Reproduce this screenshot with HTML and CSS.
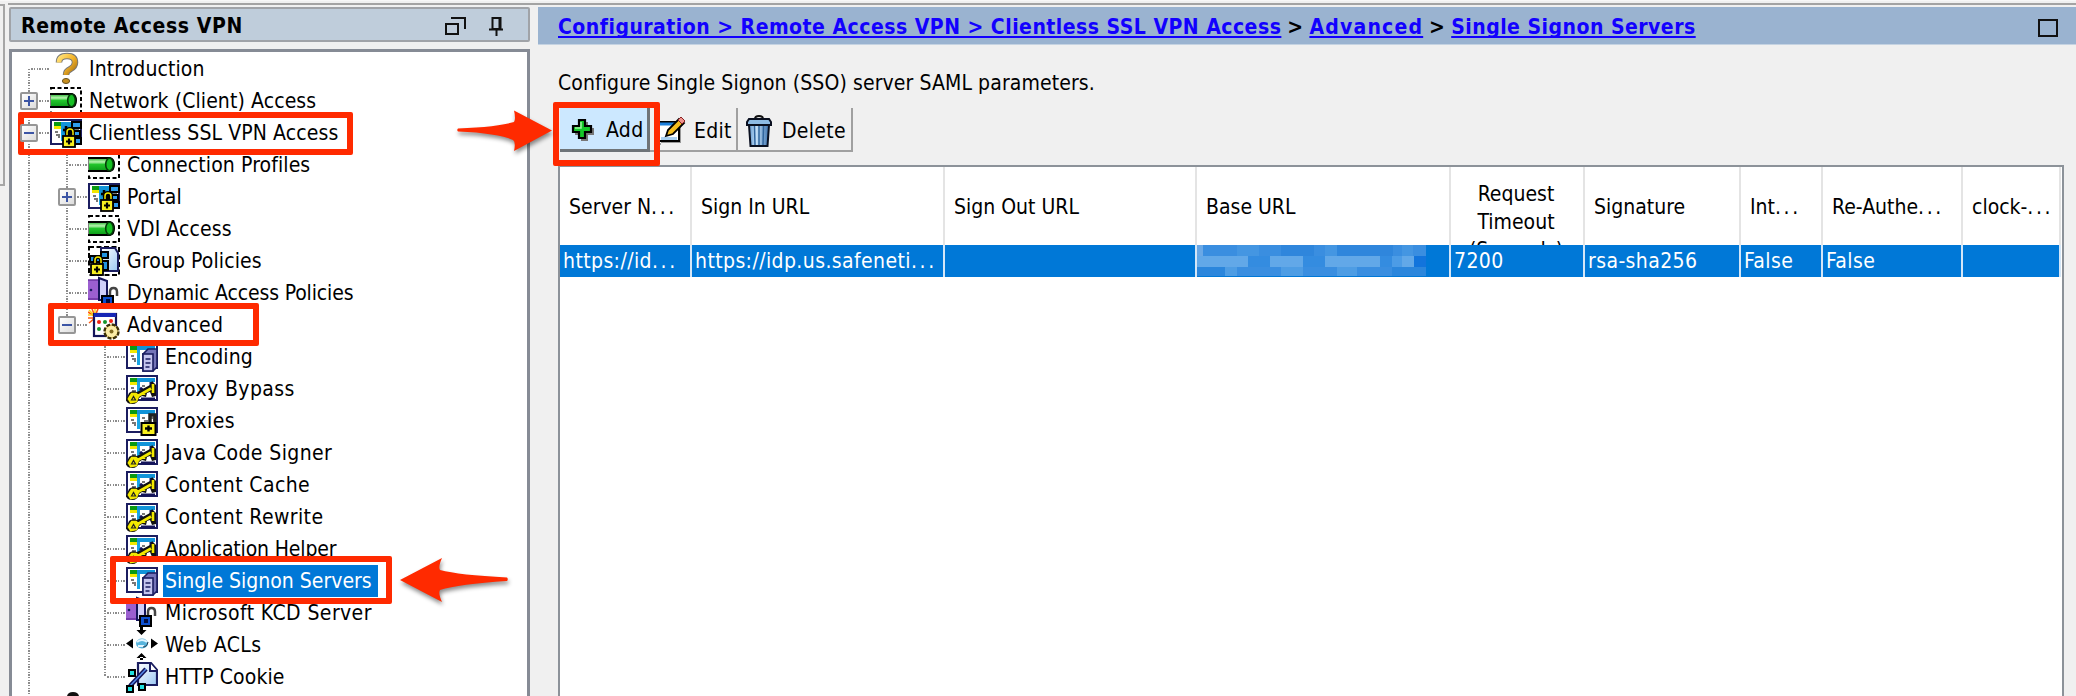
FILE: index.html
```html
<!DOCTYPE html>
<html lang="en">
<head>
<meta charset="utf-8">
<title>Remote Access VPN</title>
<link rel="stylesheet" href="styles.css">
</head>
<body>
<svg class="defs" aria-hidden="true">
  <defs>
    <linearGradient id="gold" x1="0" y1="0" x2="1" y2="1"><stop offset="0" stop-color="#ffe27a"/><stop offset=".5" stop-color="#f5b52a"/><stop offset="1" stop-color="#a06a10"/></linearGradient>
    <linearGradient id="green" x1="0" y1="0" x2="0" y2="1"><stop offset="0" stop-color="#1fae2a"/><stop offset=".3" stop-color="#b8f5b0"/><stop offset=".5" stop-color="#22c52c"/><stop offset="1" stop-color="#0c9a18"/></linearGradient>
    <linearGradient id="sheet" x1="0" y1="0" x2="1" y2="1"><stop offset="0" stop-color="#fff"/><stop offset="1" stop-color="#9cc8f4"/></linearGradient>
    <linearGradient id="can" x1="0" y1="0" x2="1" y2="0"><stop offset="0" stop-color="#5d94cc"/><stop offset=".35" stop-color="#c5e2fa"/><stop offset="1" stop-color="#3a70ac"/></linearGradient>
    <symbol id="page" viewBox="0 0 32 32">
      <rect x="1" y="3" width="30" height="24" fill="#fff" stroke="#1b1d60" stroke-width="2"/>
      <rect x="4" y="5" width="7" height="4" fill="#0a9a12"/><rect x="4" y="9" width="7" height="3" fill="#f2e800"/>
      <rect x="11" y="5" width="18" height="4" fill="#1193d8"/><rect x="11" y="9" width="3" height="15" fill="#17a5e6"/>
      <path d="M5 15h3M6 18h3v3M16 13h3M18 16h4M24 13h4v3M17 21h3" stroke="#777" stroke-width="2" fill="none"/>
    </symbol>
    <symbol id="lock" viewBox="0 0 32 32">
      <path d="M17 19v-4q0-3 3-3t3 3v4" fill="none" stroke="#000" stroke-width="4"/>
      <path d="M17 19v-4q0-3 3-3t3 3v4" fill="none" stroke="#f2e800" stroke-width="1.5"/>
      <rect x="13" y="19" width="12" height="11" fill="#f8f020" stroke="#000" stroke-width="1.8"/>
      <path d="M19 21.500v6M16 24.500h6" stroke="#000" stroke-width="2.200"/>
    </symbol>
    <symbol id="i-help" viewBox="0 0 32 32" overflow="visible">
      <path d="M9 9.500q0-6.500 8-6.500t8 6.500q0 4-4.500 6.500-4.500 2-4.500 6" fill="none" stroke="#777" stroke-width="6.500"/>
      <path d="M9 9.500q0-6.500 8-6.500t8 6.500q0 4-4.500 6.500-4.500 2-4.500 6" fill="none" stroke="url(#gold)" stroke-width="4.600"/>
      <ellipse cx="16" cy="28" rx="3.600" ry="2.500" fill="#c89020" stroke="#665020"/>
    </symbol>
    <symbol id="i-tunnel" viewBox="0 0 32 32">
      <rect x="1" y="3" width="30" height="26" fill="none" stroke="#000" stroke-width="2" stroke-dasharray="4 2.500"/>
      <rect x="0" y="7" width="24" height="17" fill="#fff"/>
      <path d="M0 9h22q4 1 4 6.500T22 22H0z" fill="url(#green)" stroke="#000" stroke-width="2"/>
      <path d="M0 10v11" stroke="#fff" stroke-width="1"/>
      <ellipse cx="21.500" cy="15.500" rx="3.800" ry="6.200" fill="#16c024" stroke="#053d08" stroke-width="1.600"/>
    </symbol>
    <symbol id="i-portal" viewBox="0 0 32 32">
      <use href="#page"/>
      <path d="M11 9h14v16H14z" fill="#1193d8"/>
      <path d="M22 5h9v6h-9zM20 14h10v5H20zM25 21h6v6h-6z" fill="#2f9cec" stroke="#000" stroke-width="2"/>
      <path d="M13 13h9M16 9v7" stroke="#000" stroke-width="2.500"/>
      <use href="#lock"/>
    </symbol>
    <symbol id="i-group" viewBox="0 0 32 32">
      <rect x="1" y="2" width="30" height="28" fill="none" stroke="#000" stroke-width="2" stroke-dasharray="5 2.500"/>
      <path d="M13 3h14l3 5v18H13z" fill="url(#sheet)" stroke="#1b1d60" stroke-width="2"/>
      <path d="M2 11h11v6H2zM13 7h7v6h-7zM14 16h6v9h-6z" fill="#2094e0" stroke="#000" stroke-width="2"/>
      <use href="#lock" x="-10" y="0"/>
    </symbol>
    <symbol id="i-door" viewBox="0 0 32 32" overflow="visible">
      <path d="M0 3h12v20H0z" fill="#9b5fd0"/><path d="M0 3h12M0 22h12" stroke="#6c35a0" stroke-width="1.500"/>
      <circle cx="3" cy="13" r="1.300" fill="#1b1d60"/>
      <path d="M11 1l8 3v19h-8z" fill="#cfcffa" stroke="#14145a" stroke-width="2"/>
      <path d="M22 19v-4q0-4 3.500-4t3.500 4v4" fill="none" stroke="#444" stroke-width="2.500"/>
      <rect x="14" y="19" width="11" height="10" fill="#0d50d0" stroke="#000" stroke-width="2"/>
      <rect x="18" y="22" width="4" height="4" fill="#020d40"/>
    </symbol>
    <symbol id="i-advanced" viewBox="0 0 32 32">
      <path d="M0 3l8 5M4 0l3 7M0 9h7M10 0L7 7M1 14l6-5" stroke="#ff5a10" stroke-width="1.600"/><path d="M1 1l7 7M7 0v7M0 6h7" stroke="#ffd21c" stroke-width="1.500"/>
      <rect x="6" y="5" width="22" height="22" fill="#fff" stroke="#14145a" stroke-width="2.200"/><rect x="6" y="4" width="22" height="4" fill="#1726b5"/>
      <circle cx="11" cy="13" r="2" fill="#f02010"/><circle cx="17" cy="13" r="2" fill="#15962a"/><circle cx="23" cy="12" r="2" fill="#f02010"/><circle cx="11" cy="20" r="2" fill="#15962a"/>
      <circle cx="23.500" cy="22.500" r="7" fill="#f0d878" stroke="#3c3008" stroke-width="2.400" stroke-dasharray="4 1.500"/><circle cx="23.500" cy="22.500" r="5.500" fill="#faeca8"/><circle cx="23.500" cy="22.500" r="2" fill="#806a20"/>
    </symbol>
    <symbol id="i-docs" viewBox="0 0 32 32">
      <use href="#page"/>
      <path d="M17 13l5-5h9v18l-4 4H17z" fill="#7474b8" stroke="#1b1d60" stroke-width="1.600"/>
      <rect x="17" y="13" width="10" height="17" fill="#c4c4ee" stroke="#1b1d60" stroke-width="1.600"/>
      <path d="M19.500 18h5M19.500 22h5M19.500 26h4" stroke="#1b1d60" stroke-width="1.600"/>
    </symbol>
    <symbol id="i-key" viewBox="0 0 32 32">
      <use href="#page"/>
      <path d="M25 9v8M15 26h14M14 15l5 4" stroke="#14145a" stroke-width="3"/>
      <path d="M3 20q3-3 8-1l13-7 2-4 4 4v11l-4 1-2-5-3 1-1 4-4-1-3 2q-1 6-7 6-5 0-6-4z" fill="#111"/>
      <path d="M4 24l2-3h4l2 2-2 5-5 1-2-3zM11 23.500l14-8M18 19v3M27 11v9" stroke="#f2e800" stroke-width="2.600" fill="#f2e800"/>
      <path d="M5.500 27l2-3.500 2 3.500z" fill="#f2e800" stroke="#222" stroke-width="1.200"/>
    </symbol>
    <symbol id="i-proxies" viewBox="0 0 32 32">
      <use href="#page"/>
      <path d="M24 17v-7h5v7" fill="none" stroke="#222" stroke-width="3.500"/>
      <rect x="15.500" y="18" width="14" height="12" fill="#f8f020" stroke="#000" stroke-width="2"/>
      <path d="M22.500 20.500v6M19 23.500h7" stroke="#000" stroke-width="2.400"/>
    </symbol>
    <symbol id="i-acl" viewBox="0 0 32 32" overflow="visible">
      <path d="M10.500 1h10l-5 5zM14-4h3v6h-3zM10.500 29h10l-5-5zM14 28h3v3h-3zM0 14.500l7-5v10zM32 14.500l-7-5v10z" fill="#000"/>
      <ellipse cx="16" cy="14.500" rx="6" ry="5" fill="#58b4dc"/><path d="M11 13q5-4 10 0M12 17h6" stroke="#dff4ff" stroke-width="2" fill="none"/><path d="M17 18q4 0 5-5" stroke="#234" fill="none"/>
    </symbol>
    <symbol id="i-cookie" viewBox="0 0 32 32">
      <path d="M12 2h13l6 7v15H12z" fill="url(#sheet)" stroke="#1b1d60" stroke-width="2.200"/><path d="M24 2v8h7" fill="#fff" stroke="#1b1d60" stroke-width="2"/>
      <path d="M4 25L20 8" stroke="#14145a" stroke-width="4.500"/><path d="M4 25L20 8" stroke="#5588e8" stroke-width="1.500"/>
      <path d="M3 9h6v6H3zM1 25h6v6H1zM13 23h6v6h-6z" fill="#20e0e0" stroke="#000" stroke-width="2"/>
    </symbol>
    <symbol id="i-next" viewBox="0 0 32 32" overflow="visible"><path d="M17 3q1-4 6-4t6 4v8H17z" fill="#111"/></symbol>
  </defs>
</svg>

<div class="app">
  <div class="edge-strip"></div>
  <aside class="sidebar">
    <header class="side-head">
      <span class="side-title">Remote Access VPN</span>
      <svg class="side-tools" viewBox="0 0 60 22"><g fill="none" stroke="#111" stroke-width="2"><rect x="1" y="8" width="12" height="10"/><path d="M6 2h14v11M47.500 2h8v11h-8zM44 13.500h14M51.500 14v6M54.500 2v11"/></g></svg>
    </header>
    <nav class="tree">
      <div class="row"><i class="g start"></i><svg class="ico"><use href="#i-help"/></svg><span class="label">Introduction</span></div>
      <div class="row"><i class="g node"><b class="box plus"></b></i><svg class="ico"><use href="#i-tunnel"/></svg><span class="label">Network (Client) Access</span></div>
      <div class="row"><i class="g node"><b class="box"></b></i><svg class="ico"><use href="#i-portal"/></svg><span class="label">Clientless SSL VPN Access</span></div>
      <div class="row"><i class="g line"></i><i class="g"></i><svg class="ico"><use href="#i-tunnel"/></svg><span class="label">Connection Profiles</span></div>
      <div class="row"><i class="g line"></i><i class="g node"><b class="box plus"></b></i><svg class="ico"><use href="#i-portal"/></svg><span class="label">Portal</span></div>
      <div class="row"><i class="g line"></i><i class="g"></i><svg class="ico"><use href="#i-tunnel"/></svg><span class="label">VDI Access</span></div>
      <div class="row"><i class="g line"></i><i class="g"></i><svg class="ico"><use href="#i-group"/></svg><span class="label">Group Policies</span></div>
      <div class="row"><i class="g line"></i><i class="g"></i><svg class="ico"><use href="#i-door"/></svg><span class="label tight">Dynamic Access Policies</span></div>
      <div class="row"><i class="g line"></i><i class="g node end"><b class="box"></b></i><svg class="ico"><use href="#i-advanced"/></svg><span class="label wide">Advanced</span></div>
      <div class="row"><i class="g line"></i><i class="g none"></i><i class="g"></i><svg class="ico"><use href="#i-docs"/></svg><span class="label">Encoding</span></div>
      <div class="row"><i class="g line"></i><i class="g none"></i><i class="g"></i><svg class="ico"><use href="#i-key"/></svg><span class="label wide">Proxy Bypass</span></div>
      <div class="row"><i class="g line"></i><i class="g none"></i><i class="g"></i><svg class="ico"><use href="#i-proxies"/></svg><span class="label wide">Proxies</span></div>
      <div class="row"><i class="g line"></i><i class="g none"></i><i class="g"></i><svg class="ico"><use href="#i-key"/></svg><span class="label wide">Java Code Signer</span></div>
      <div class="row"><i class="g line"></i><i class="g none"></i><i class="g"></i><svg class="ico"><use href="#i-key"/></svg><span class="label wide">Content Cache</span></div>
      <div class="row"><i class="g line"></i><i class="g none"></i><i class="g"></i><svg class="ico"><use href="#i-key"/></svg><span class="label wide">Content Rewrite</span></div>
      <div class="row"><i class="g line"></i><i class="g none"></i><i class="g"></i><svg class="ico"><use href="#i-key"/></svg><span class="label tight">Application Helper</span></div>
      <div class="row"><i class="g line"></i><i class="g none"></i><i class="g"></i><svg class="ico"><use href="#i-docs"/></svg><span class="label selected">Single Signon Servers</span></div>
      <div class="row"><i class="g line"></i><i class="g none"></i><i class="g"></i><svg class="ico"><use href="#i-door"/></svg><span class="label wide">Microsoft KCD Server</span></div>
      <div class="row"><i class="g line"></i><i class="g none"></i><i class="g"></i><svg class="ico"><use href="#i-acl"/></svg><span class="label wide">Web ACLs</span></div>
      <div class="row"><i class="g line"></i><i class="g none"></i><i class="g end"></i><svg class="ico"><use href="#i-cookie"/></svg><span class="label">HTTP Cookie</span></div>
      <div class="row"><i class="g line"></i><svg class="ico"><use href="#i-next"/></svg></div>
    </nav>
  </aside>

  <main class="main">
    <header class="crumbs">
      <div class="trail"><a>Configuration &gt; Remote Access VPN &gt; Clientless SSL VPN Access</a><span class="sep">&gt;</span><a class="crumb-wide">Advanced</a><span class="sep">&gt;</span><a>Single Signon Servers</a></div>
      <span class="maximize"></span>
    </header>
    <p class="desc">Configure Single Signon (SSO) server SAML parameters.</p>
    <div class="toolbar">
      <button class="btn add"><svg viewBox="0 0 24 24"><path d="M10 4h7v6h6v7h-6v6h-7v-6H4v-7h6z" fill="#777"/><path d="M8 2h6v6h6v6h-6v6H8v-6H2V8h6z" fill="#14c829" stroke="#000" stroke-width="2.200"/><path d="M10 4v6H4" stroke="#9df5a0" stroke-width="1.500" fill="none"/></svg><span>Add</span></button>
      <button class="btn edit"><svg viewBox="0 0 28 28"><path d="M3 6h20v20H1v2H3z" fill="#999"/><rect x="1" y="5" width="20" height="19" fill="#fff" stroke="#000" stroke-width="2"/><rect x="2" y="5.500" width="18" height="3" fill="#1b7fdc"/><path d="M3 20h16v3H3z" fill="#a8cff0"/><path d="M8 19l2-6L21 2l5 4-11 11z" fill="#f5bd20" stroke="#000" stroke-width="1.800"/><path d="M20 3l3-3 4 4-3 3z" fill="#f0918c" stroke="#822"/></svg><span>Edit</span></button>
      <button class="btn delete"><svg viewBox="0 0 26 32"><path d="M9 4q0-3 4-3t4 3" fill="none" stroke="#111" stroke-width="2"/><path d="M3 10h20l-1.500 21H4.500z" fill="url(#can)" stroke="#0a1020" stroke-width="2"/><path d="M8.500 11l.5 19M13 11v19M17.500 11l-.5 19" stroke="#31659d" stroke-width="1.500"/><path d="M3 4h20l2 3v3H1V7z" fill="#8dbbe4" stroke="#0a1020" stroke-width="2"/></svg><span>Delete</span></button>
    </div>
    <section class="grid">
      <div class="cells head">
        <div>Server N<span class="dots">...</span></div><div>Sign In URL</div><div>Sign Out URL</div><div>Base URL</div><div class="wrap">Request<br>Timeout<br>(Seconds)</div><div>Signature</div><div>Int<span class="dots">...</span></div><div>Re-Authe<span class="dots">...</span></div><div>clock-<span class="dots">...</span></div>
      </div>
      <div class="cells data">
        <div>https://id<span class="dots">...</span></div><div>https://idp.us.safeneti<span class="dots">...</span></div><div></div><div><svg class="mosaic" viewBox="0 0 229 31"><rect width="229" height="31" fill="#3a8ee0"/><path d="M0 0h6v11H0z" fill="#6aa8e6"/><path d="M40 0h22v11H40zM128 0h12v11h-12zM205 0h11v11h-11z" fill="#4496e2"/><path d="M84 0h33v11H84zM140 0h56v11h-56z" fill="#2f86dc"/><path d="M0 11h51v11H0zM73 11h33v11H73zM128 11h55v11h-55zM205 11h12v11h-12z" fill="#62a8e8"/><path d="M51 11h22v11H51zM106 11h22v11h-22zM183 11h12v11h-12z" fill="#348ce0"/><path d="M195 11h10v11h-10z" fill="#4c9ce6"/><path d="M217 11h12v11h-12z" fill="#1274dc"/><path d="M0 22h28v9H0zM195 22h34v9h-34z" fill="#2b86dc"/><path d="M28 22h12v9H28zM84 22h22v9H84zM140 22h20v9h-20z" fill="#4e9de4"/></svg></div><div>7200</div><div>rsa-sha256</div><div>False</div><div>False</div><div></div>
      </div>
    </section>
  </main>

  <div class="mark m-clientless"></div>
  <div class="mark m-advanced"></div>
  <div class="mark m-single"></div>
  <div class="mark m-add"></div>
  <svg class="arrow a-right" viewBox="0 0 96 42"><path d="M1 18.500Q40 17 57 12q2-3 0-11.500L95 20.500 57 41q2-9-1-11Q40 23 1 21.500q-1.500-1.500 0-3z"/></svg>
  <svg class="arrow a-left" viewBox="0 0 110 46"><path d="M108 20.500Q60 18 41 13q-2-3 2-12L1 23l42 22q-4-9-2-12 19-6 67-9 1.500-2 0-3.500z"/></svg>
</div>
</body>
</html>
```
FILE: styles.css
```css
* { box-sizing: border-box; }
body {
  margin: 0;
  background: #f0f0f0;
  color: #000;
  font-family: "DejaVu Sans Condensed", "DejaVu Sans", sans-serif;
  font-stretch: condensed;
  font-size: 21px;
  letter-spacing: 0;
}
.defs { position: absolute; width: 0; height: 0; }
.app {
  position: relative;
  display: flex;
  width: 2076px;
  height: 696px;
  overflow: hidden;
  border-top: 1px solid #f7f7f7;
}
.app::before {
  content: "";
  position: absolute;
  left: 8px; right: 0; top: 2px;
  height: 2px;
  background: #a3a3a3;
}
.edge-strip {
  width: 5px; height: 182px;
  margin: 3px 4px 0 0;
  border: solid #a6a6a6;
  border-width: 2px 2px 2px 0;
}
.sidebar {
  display: flex;
  flex-direction: column;
  width: 521px;
  height: 695px;
  padding-top: 6px;
}
.side-head {
  display: flex;
  flex: none;
  align-items: center;
  justify-content: space-between;
  height: 35px;
  padding: 0 23px 0 10px;
  background: #bfcddb;
  border: 2px solid #a0a3a8;
  border-radius: 2px;
}
.side-title { font-weight: bold; letter-spacing: 0.6px; padding-top: 3px; }
.side-tools { width: 60px; height: 22px; margin-top: 5px; }
.tree {
  flex: 1;
  min-height: 0;
  margin-top: 7px;
  padding-top: 1px;
  background: #fff;
  border: 3px solid #868b95;
  border-bottom: 0;
}
.row { display: flex; height: 32px; }
.g { position: relative; width: 38px; height: 32px; flex: none; }
.g::before, .g::after { content: ""; position: absolute; }
.g::before {
  left: 16px; top: 0;
  width: 2px; height: 32px;
  background: repeating-linear-gradient(#8c8c8c 0 1.33px, #fff 1.33px 2.67px);
}
.g::after {
  left: 18px; top: 15px;
  width: 19px; height: 2px;
  background: repeating-linear-gradient(90deg, #fff 0 1.33px, #8c8c8c 1.33px 2.67px);
}
.g.start::before { top: 16px; height: 16px; }
.g.end::before { height: 16px; }
.g.line::after, .g.none::after, .g.none::before { display: none; }
.box {
  position: absolute;
  z-index: 1;
  left: 8px; top: 7px;
  width: 18px; height: 18px;
  border: 2px solid #969696;
  border-radius: 2px;
  background:
    linear-gradient(#3c55a5, #3c55a5) center / 10px 2px no-repeat,
    linear-gradient(135deg, #fff, #dcdcdc);
}
.box.plus {
  background:
    linear-gradient(#3c55a5, #3c55a5) center / 10px 2px no-repeat,
    linear-gradient(#3c55a5, #3c55a5) center / 2px 10px no-repeat,
    linear-gradient(135deg, #fff, #dcdcdc);
}
.ico { width: 32px; height: 32px; flex: none; overflow: visible; }
.label {
  height: 32px;
  margin-left: 5px;
  padding: 0 6px 0 2px;
  line-height: 33px;
  letter-spacing: 0.1px;
  white-space: nowrap;
}
.label.wide { letter-spacing: 0.4px; }
.label.tight { letter-spacing: -0.15px; }
.label.selected { background: #0078d7; color: #fff; letter-spacing: 0; }

.main { flex: 1; min-width: 0; margin-left: 8px; padding-top: 6px; }
.crumbs {
  display: flex;
  justify-content: space-between;
  height: 38px;
  padding: 0 18px 0 20px;
  background: #9ab3d0;
  border-bottom: 1px solid #c5d3e2;
}
.trail { display: flex; font-weight: bold; line-height: 40px; letter-spacing: 0.48px; white-space: nowrap; }
.trail a { color: #1200ff; text-decoration: underline; text-decoration-thickness: 2px; text-underline-offset: 2px; text-decoration-skip-ink: none; }
.trail .crumb-wide { letter-spacing: 1.2px; }
.sep { width: 28px; text-align: center; }
.maximize { width: 20px; height: 18px; margin-top: 12px; border: 2px solid #111; }
.desc { margin: 0 0 0 20px; padding-top: 24px; height: 63px; line-height: 28px; letter-spacing: 0.1px; }
.toolbar { display: flex; height: 44px; margin-left: 22px; }
.btn {
  display: flex;
  align-items: center;
  height: 44px;
  padding: 3px 0 0;
  border: solid #a0a0a0;
  border-width: 0 2px 2px 0;
  background: #f0f0f0;
  font: inherit;
  letter-spacing: 0.3px;
  color: #000;
}
.add { width: 90px; background: #cce8ff; border-color: #6f7478; border-width: 0 3px 3px 0; }
.add svg { width: 24px; height: 24px; margin: 0 11px 0 11px; }
.edit { width: 88px; }
.edit svg { width: 28px; height: 28px; margin: 0 8px 0 8px; }
.delete { width: 115px; }
.delete svg { width: 26px; height: 32px; margin: 0 10px 0 8px; }
.grid {
  width: 1506px;
  height: 560px;
  margin: 13px 0 0 20px;
  border: 2px solid #8c9299;
  background: #fff;
}
.cells { display: grid; grid-template-columns: 132px 253px 252px 254px 134px 156px 82px 140px 98px; }
.cells > div { overflow: hidden; white-space: nowrap; border-right: 2px solid #e4e4e4; }
.head { height: 78px; line-height: 81px; }
.head > div { padding-left: 9px; height: 78px; }
.head .wrap { padding: 13px 2px 0 0; text-align: center; line-height: 28px; }
.data { height: 32px; color: #fff; letter-spacing: 0.4px; }
.data > div { position: relative; padding-left: 3px; height: 32px; background: #0078d7; line-height: 33px; border-right-color: #d4e6f7; }
.dots { letter-spacing: 2.6px; }
.mosaic { position: absolute; left: 0; top: 0; width: 229px; height: 31px; }

.mark { position: absolute; border: 6px solid #ff2a00; border-radius: 2px; }
.m-clientless { left: 18px; top: 111px; width: 335px; height: 43px; }
.m-advanced { left: 48px; top: 302px; width: 211px; height: 43px; }
.m-single { left: 110px; top: 555px; width: 282px; height: 48px; }
.m-add { left: 553px; top: 101px; width: 107px; height: 64px; }
.arrow { position: absolute; fill: #ff2a00; overflow: visible; filter: drop-shadow(1px 3px 2px rgba(0, 0, 0, .45)); }
.a-right { left: 457px; top: 109px; width: 96px; height: 42px; }
.a-left { left: 399px; top: 556px; width: 110px; height: 46px; }
```
